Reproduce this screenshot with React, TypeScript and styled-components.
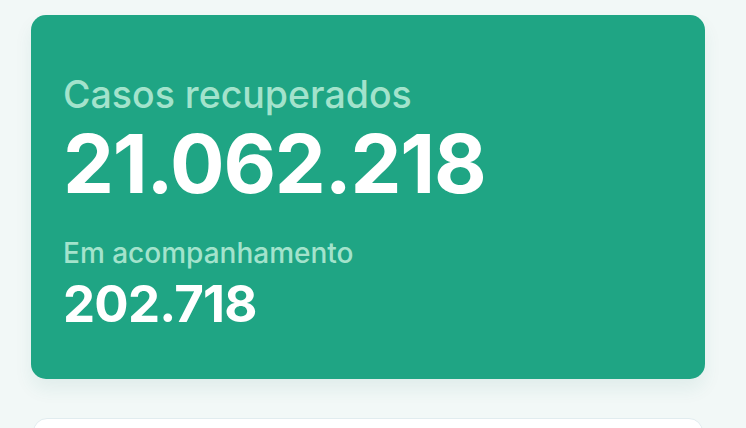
import React from "react";
import styled, { createGlobalStyle } from "styled-components";

const Global = createGlobalStyle`
  html, body { margin: 0; padding: 0; background: #f2f8f7; }
  body { font-family: Inter, "Noto Sans", sans-serif; }
`;

const Page = styled.div`
  width: 746px;
  height: 428px;
  overflow: hidden;
  box-sizing: border-box;
  padding: 15px 41px 0 31px;
  display: flex;
  flex-direction: column;
  gap: 39px;
`;

const Card = styled.section`
  flex-shrink: 0;
  background: #1fa584;
  border-radius: 15px;
  height: 364px;
  box-sizing: border-box;
  padding: 61px 32px 0;
  box-shadow: 0 10px 18px rgba(30, 120, 100, 0.08);
  display: flex;
  flex-direction: column;
`;

const Label = styled.div<{ $size: number; $mt?: number }>`
  color: #a3e3cc;
  font-size: ${(p) => p.$size}px;
  font-weight: 500;
  line-height: 1;
  margin-top: ${(p) => p.$mt ?? 0}px;
`;

const Value = styled.div<{ $size: number; $mt: number; $ls: number }>`
  color: #ffffff;
  font-size: ${(p) => p.$size}px;
  font-weight: 700;
  line-height: 1;
  letter-spacing: ${(p) => p.$ls}px;
  margin-top: ${(p) => p.$mt}px;
`;

const NextCard = styled.div`
  flex-shrink: 0;
  margin: 0 2px;
  height: 60px;
  background: #ffffff;
  border: 1px solid #e1ecef;
  border-radius: 14px;
`;

export default function App() {
  return (
    <>
      <Global />
      <Page>
        <Card>
          <Label $size={37.5}>Casos recuperados</Label>
          <Value $size={81} $mt={10.5} $ls={-1.2}>21.062.218</Value>
          <Label $size={28} $mt={34}>Em acompanhamento</Label>
          <Value $size={51} $mt={11} $ls={-0.8}>202.718</Value>
        </Card>
        <NextCard />
      </Page>
    </>
  );
}
